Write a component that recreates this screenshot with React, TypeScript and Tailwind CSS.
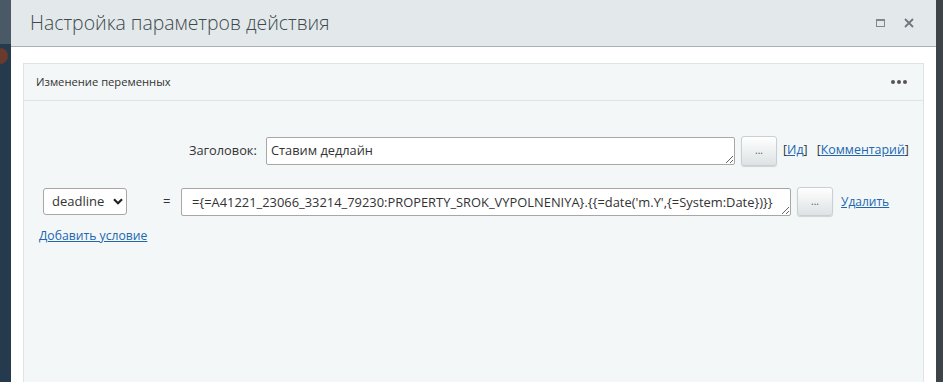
import React from "react";

const font = { fontFamily: '"Open Sans", "Noto Sans", Arial, sans-serif' };

function DotsButton({ w, h }: { w: string; h: string }) {
  return (
    <button
      className={`${w} ${h} shrink-0 rounded-[3px] border border-[#c9cfd2] bg-gradient-to-b from-white to-[#dde2e4] shadow-[0_1px_1px_rgba(0,0,0,0.15)] flex items-center justify-center text-[10px] leading-none text-[#555] pb-[2px]`}
    >
      ...
    </button>
  );
}

export default function App() {
  return (
    <div className="w-[943px] h-[382px] flex overflow-hidden text-[#333]" style={font}>
      <div className="w-[11px] shrink-0 bg-[#263a4e] flex flex-col">
        <div className="h-[44px] bg-[#4a5966]" />
        <div className="mt-[4px] w-[8px] h-[16px] rounded-r-full bg-[#6a3a2c]" />
      </div>
      <div className="w-[925px] shrink-0 flex flex-col bg-white">
        <div className="h-[47px] shrink-0 bg-[#e3e9eb] border-b border-[#a9b1b4] flex items-center pl-[19px] pr-[22px]">
          <div className="text-[19.4px] font-light text-[#40484c] flex-1 leading-none pb-[1px]">
            Настройка параметров действия
          </div>
          <svg width="10" height="9" viewBox="0 0 10 9" className="mr-[18px]">
            <rect x="0.5" y="0.5" width="8" height="7" fill="none" stroke="#7e878c" strokeWidth="1" />
            <rect x="0.5" y="0.5" width="8" height="1.5" fill="#7e878c" />
          </svg>
          <svg width="10" height="10" viewBox="0 0 10 10">
            <path d="M1 1 L9 9 M9 1 L1 9" stroke="#6e777c" strokeWidth="1.8" />
          </svg>
        </div>
        <div className="flex-1 pt-[16px] pl-[12px] pr-[12px] bg-white flex flex-col">
          <div className="flex-1 border border-b-0 border-[#dde4e7] bg-[#f4f7f8] flex flex-col">
            <div className="h-[37px] shrink-0 border-b border-[#dde4e7] flex items-center pl-[12px] pr-[16px]">
              <div className="flex-1 text-[11.2px] text-[#333]">Изменение переменных</div>
              <div className="flex gap-[2px]">
                <span className="w-[4px] h-[4px] rounded-full bg-[#555]" />
                <span className="w-[4px] h-[4px] rounded-full bg-[#555]" />
                <span className="w-[4px] h-[4px] rounded-full bg-[#555]" />
              </div>
            </div>
            <div className="pt-[34px] flex flex-col">
              <div className="flex items-center pl-[165px] h-[31px]">
                <span className="text-[12.8px] text-[#333] w-[77px] shrink-0">Заголовок:</span>
                <textarea
                  readOnly
                  defaultValue="Ставим дедлайн"
                  className="w-[469px] h-[28px] shrink-0 resize border border-[#a7a7a7] rounded-[2px] bg-white text-[12.8px] leading-[18px] px-[4px] pt-[3px] text-[#333] outline-none overflow-hidden"
                  style={font}
                />
                <div className="w-[6px]" />
                <DotsButton w="w-[36px]" h="h-[30px]" />
                <a className="ml-[6px] text-[12.4px] text-[#333]">
                  [<span className="text-[#2067b0] underline">Ид</span>]
                </a>
                <a className="ml-[9px] text-[12.4px] text-[#333]">
                  [<span className="text-[#2067b0] underline">Комментарий</span>]
                </a>
              </div>
              <div className="flex items-center pl-[19px] mt-[20px] h-[31px]">
                <div className="w-[84px] h-[27px] shrink-0 border border-[#a7a7a7] rounded-[3px] bg-white flex items-center pl-[8px] pr-[2px] text-[13px] text-[#333]">
                  <span className="flex-1">deadline</span>
                  <svg width="10" height="7" viewBox="0 0 10 7" className="mr-[1px]">
                    <path d="M1 1.2 L5 5.2 L9 1.2" fill="none" stroke="#222" strokeWidth="2.2" />
                  </svg>
                </div>
                <span className="ml-[36px] w-[18px] shrink-0 text-[13px] text-[#333]">=</span>
                <textarea
                  readOnly
                  defaultValue="={=A41221_23066_33214_79230:PROPERTY_SROK_VYPOLNENIYA}.{{=date('m.Y',{=System:Date})}}"
                  className="w-[610px] h-[28px] shrink-0 resize border border-[#a7a7a7] rounded-[2px] bg-white text-[12.9px] leading-[18px] pl-[10px] pt-[4px] text-[#333] outline-none overflow-hidden whitespace-nowrap"
                  style={font}
                />
                <div className="w-[6px]" />
                <DotsButton w="w-[36px]" h="h-[29px]" />
                <a className="ml-[8px] text-[12px] text-[#2067b0] underline">Удалить</a>
              </div>
              <div className="pl-[15px] mt-[5px]">
                <a className="text-[12.2px] text-[#2067b0] underline">Добавить условие</a>
              </div>
            </div>
          </div>
        </div>
      </div>
      <div className="flex-1 bg-[#3c4349]" />
    </div>
  );
}
